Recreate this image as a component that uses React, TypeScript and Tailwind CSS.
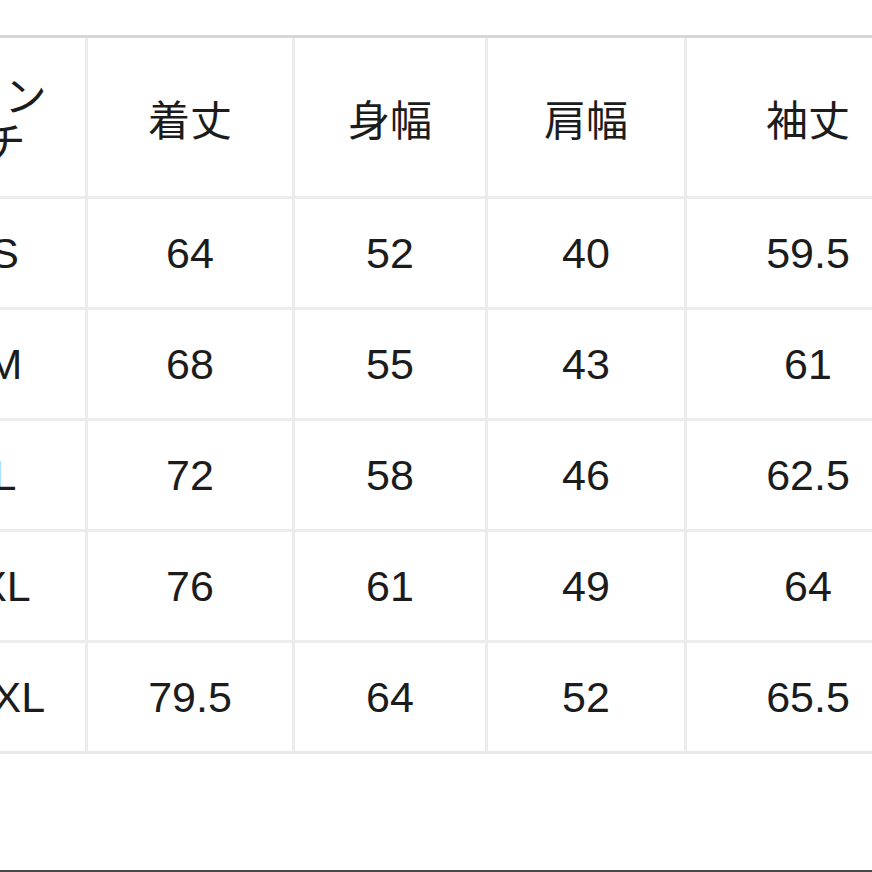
import React from "react";

const headers = ["着丈", "身幅", "肩幅", "袖丈"];
const rows: [string, string[]][] = [
  ["S", ["64", "52", "40", "59.5"]],
  ["M", ["68", "55", "43", "61"]],
  ["L", ["72", "58", "46", "62.5"]],
  ["XL", ["76", "61", "49", "64"]],
  ["XXL", ["79.5", "64", "52", "65.5"]],
];

const jp = { fontFamily: '"Noto Sans CJK JP", "Noto Sans", sans-serif' };
const num = { fontFamily: '"Liberation Sans", Arial, sans-serif' };

export default function App() {
  return (
    <div className="relative flex h-[872px] w-[872px] flex-col overflow-hidden bg-white">
      <div className="pt-[35px]">
        <div className="ml-[-76px] grid w-[1010px] grid-cols-[161px_204px_190px_196px_242px] grid-rows-[158px_108px_108px_108px_108px_108px] gap-[3px] border-y-[3px] border-[#e9e9e9] border-t-[#d6d6d6] bg-[#ececec]">
          <div
            className="flex items-center justify-center bg-white text-center text-[42px] leading-[46px] text-[#1c1c1c]"
            style={jp}
          >
            <span>
              セン
              <br />
              チ
            </span>
          </div>
          {headers.map((h) => (
            <div
              key={h}
              className="flex items-center justify-center bg-white text-[42px] text-[#1c1c1c]"
              style={jp}
            >
              {h}
            </div>
          ))}
          {rows.map(([size, vals]) => (
            <React.Fragment key={size}>
              <div
                className="flex items-center justify-center bg-white text-[43px] text-[#1c1c1c]"
                style={num}
              >
                {size}
              </div>
              {vals.map((v, i) => (
                <div
                  key={i}
                  className="flex items-center justify-center bg-white text-[43px] text-[#1c1c1c]"
                  style={num}
                >
                  {v}
                </div>
              ))}
            </React.Fragment>
          ))}
        </div>
      </div>
      <div className="mt-auto h-[2px] w-full bg-[#4a4a4a]" />
    </div>
  );
}
